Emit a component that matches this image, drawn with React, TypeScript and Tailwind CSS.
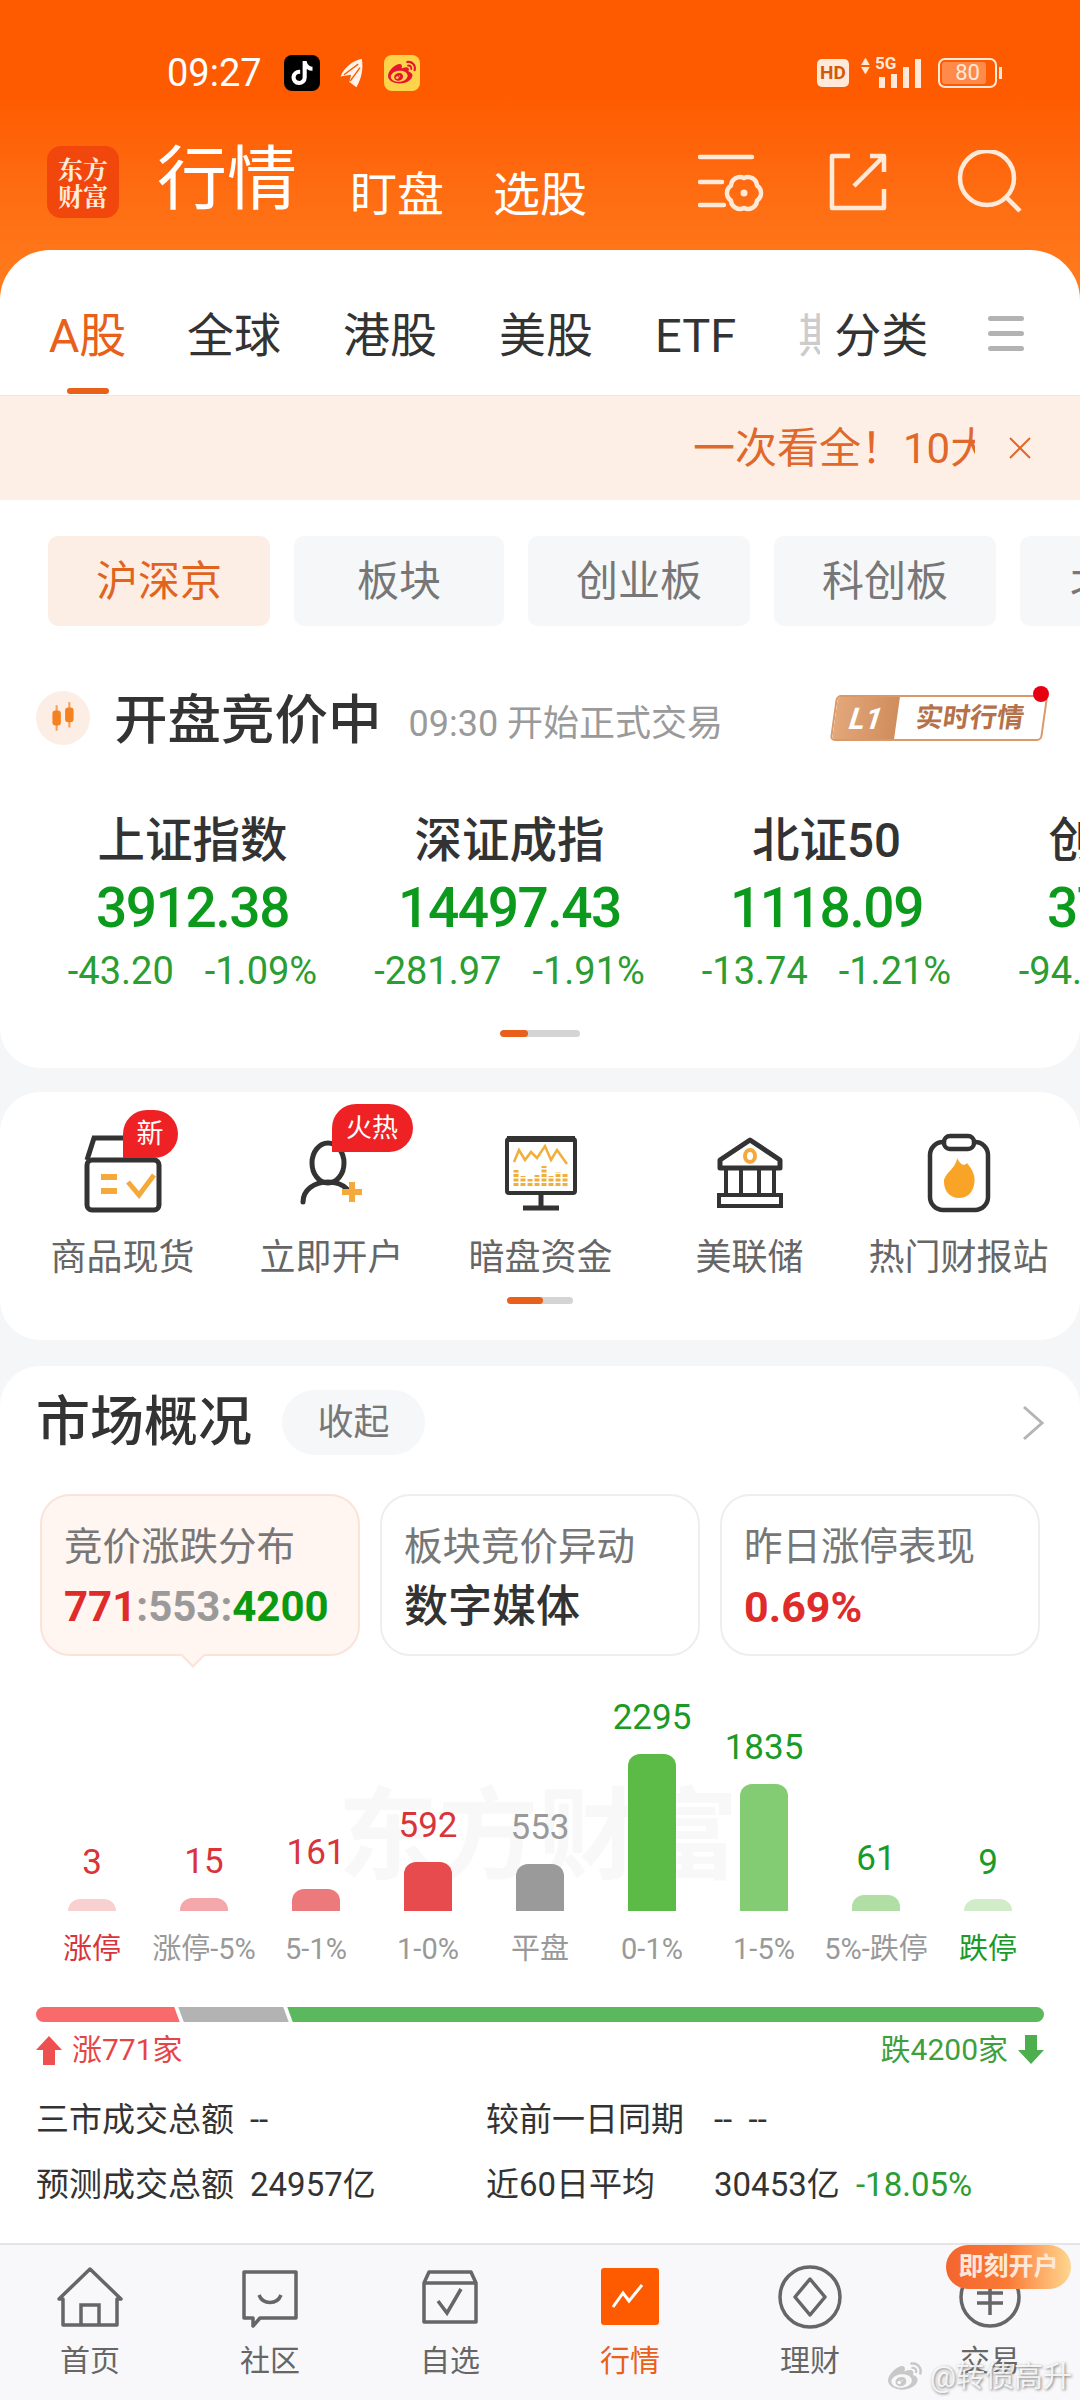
import { FaTiktok, FaWeibo } from "react-icons/fa";

const tabs = ["全球", "港股", "美股"];
const chips = ["板块", "创业板", "科创板"];

const indices = [
  { name: "上证指数", value: "3912.38", diff: "-43.20", pct: "-1.09%" },
  { name: "深证成指", value: "14497.43", diff: "-281.97", pct: "-1.91%" },
  { name: "北证50", value: "1118.09", diff: "-13.74", pct: "-1.21%" },
  { name: "创业板指", value: "3712.36", diff: "-94.52", pct: "-2.48%" },
];

const bars = [
  { n: "3", label: "涨停", h: "h-[12px]", bar: "bg-[#f8d0d0]", num: "text-[#d8343a]", text: "text-[#d8343a]" },
  { n: "15", label: "涨停-5%", h: "h-[13px]", bar: "bg-[#f5a8ab]", num: "text-[#d8343a]", text: "text-[#999999]" },
  { n: "161", label: "5-1%", h: "h-[22px]", bar: "bg-[#ec7a7c]", num: "text-[#d8343a]", text: "text-[#999999]" },
  { n: "592", label: "1-0%", h: "h-[49px]", bar: "bg-[#e84b4e]", num: "text-[#d8343a]", text: "text-[#999999]" },
  { n: "553", label: "平盘", h: "h-[47px]", bar: "bg-[#9a9a9a]", num: "text-[#999999]", text: "text-[#999999]" },
  { n: "2295", label: "0-1%", h: "h-[157px]", bar: "bg-[#5cbb46]", num: "text-[#1a9a26]", text: "text-[#999999]" },
  { n: "1835", label: "1-5%", h: "h-[127px]", bar: "bg-[#84cc74]", num: "text-[#1a9a26]", text: "text-[#999999]" },
  { n: "61", label: "5%-跌停", h: "h-[16px]", bar: "bg-[#b0dea5]", num: "text-[#1a9a26]", text: "text-[#999999]" },
  { n: "9", label: "跌停", h: "h-[12px]", bar: "bg-[#d0ecc8]", num: "text-[#1a9a26]", text: "text-[#1a9a26]" },
];

const BoxIcon = () => (
  <svg viewBox="0 0 84 84" className="w-[84px] h-[84px]" fill="none">
    <path d="M6 30 L13 8 H60 V30" stroke="#333" strokeWidth="5" />
    <rect x="6" y="30" width="72" height="50" rx="5" stroke="#333" strokeWidth="5" />
    <path d="M20 47 H36 M20 61 H36" stroke="#f5a93a" strokeWidth="6" />
    <path d="M47 52 L58 65 L73 45" stroke="#f5a93a" strokeWidth="5" />
  </svg>
);

const PersonIcon = () => (
  <svg viewBox="0 0 84 84" className="w-[84px] h-[84px]" fill="none">
    <ellipse cx="38" cy="33" rx="16" ry="20" stroke="#333" strokeWidth="5" />
    <path d="M13 72 C13 60 24 52 38 52 C46 52 52 54 57 59" stroke="#333" strokeWidth="5" strokeLinecap="round" />
    <path d="M62 52 V72 M52 62 H72" stroke="#f5a93a" strokeWidth="6" />
  </svg>
);

const MonitorIcon = () => (
  <svg viewBox="0 0 84 84" className="w-[84px] h-[84px]" fill="none">
    <rect x="8" y="9" width="68" height="54" rx="2" stroke="#333" strokeWidth="4" />
    <path d="M8 9 H76" stroke="#333" strokeWidth="6" />
    <path d="M42 63 V76 M24 78 H60" stroke="#333" strokeWidth="5" />
    <path d="M15 32 L20 20 L26 30 L32 22 L38 28 L46 16 L52 30 L58 20 L68 34" stroke="#f0ae3c" strokeWidth="2.5" />
    <path d="M17 56 V40 M24 56 V46 M31 56 V49 M38 56 V45 M45 56 V36 M52 56 V46 M59 56 V42 M66 56 V43" stroke="#f0ae3c" strokeWidth="5" strokeDasharray="3 1.5" />
  </svg>
);

const BankIcon = () => (
  <svg viewBox="0 0 84 84" className="w-[84px] h-[84px]" fill="none">
    <path d="M42 10 L12 30 V38 H72 V30 Z" stroke="#333" strokeWidth="5" strokeLinejoin="round" />
    <ellipse cx="42" cy="26" rx="5" ry="6" stroke="#f5a93a" strokeWidth="4" />
    <path d="M18 38 V65 M33 38 V65 M51 38 V65 M66 38 V65" stroke="#333" strokeWidth="4" />
    <rect x="11" y="65" width="62" height="11" stroke="#333" strokeWidth="4" />
  </svg>
);

const ClipIcon = () => (
  <svg viewBox="0 0 84 84" className="w-[84px] h-[84px]" fill="none">
    <rect x="13" y="12" width="58" height="68" rx="13" stroke="#333" strokeWidth="4.5" />
    <rect x="27" y="6" width="30" height="13" rx="6" fill="#fff" stroke="#333" strokeWidth="4.5" />
    <path d="M40 28 C44 36 48 36 50 33 C56 40 59 47 57 55 C55 65 48 68 42 68 C33 68 27 61 27 52 C27 43 39 39 40 28 Z" fill="#f9a426" />
  </svg>
);

const quick = [
  { label: "商品现货", icon: <BoxIcon /> },
  { label: "立即开户", icon: <PersonIcon /> },
  { label: "暗盘资金", icon: <MonitorIcon /> },
  { label: "美联储", icon: <BankIcon /> },
  { label: "热门财报站", icon: <ClipIcon /> },
];

const NavHome = () => (
  <svg viewBox="0 0 70 70" className="w-[70px] h-[70px]" fill="none" stroke="#666" strokeWidth="3.5">
    <path d="M8 34 L4 34 L35 4 L66 34 L62 34 V60 H8 Z" strokeLinejoin="round" />
    <path d="M26 60 V40 H44 V60" />
  </svg>
);
const NavChat = () => (
  <svg viewBox="0 0 70 70" className="w-[70px] h-[70px]" fill="none" stroke="#666" strokeWidth="3.5">
    <path d="M9 7 H61 V53 H25 L18 61 V53 H9 Z" strokeLinejoin="round" />
    <path d="M24 30 C28 40 42 40 46 30" />
  </svg>
);
const NavWatch = () => (
  <svg viewBox="0 0 70 70" className="w-[70px] h-[70px]" fill="none" stroke="#666" strokeWidth="3.5">
    <path d="M9 18 L14 7 H56 L61 18 V57 H9 Z" strokeLinejoin="round" />
    <path d="M9 18 H61" />
    <path d="M23 36 L32 48 L46 24" />
  </svg>
);
const NavMarket = () => (
  <svg viewBox="0 0 70 70" className="w-[70px] h-[70px]" fill="none">
    <rect x="6" y="3" width="58" height="57" rx="3" fill="#fe5a00" />
    <path d="M18 42 L28 28 L34 36 L47 20" stroke="#ffffff" strokeWidth="3" />
  </svg>
);
const NavFinance = () => (
  <svg viewBox="0 0 70 70" className="w-[70px] h-[70px]" fill="none" stroke="#666" strokeWidth="3.5">
    <circle cx="35" cy="32" r="30" />
    <path d="M35 14 L50 32 L35 50 L20 32 Z" strokeLinejoin="round" />
  </svg>
);
const NavTrade = () => (
  <svg viewBox="0 0 70 70" className="w-[70px] h-[70px]" fill="none" stroke="#666" strokeWidth="3.5">
    <circle cx="35" cy="32" r="29" />
    <path d="M24 12 L35 24 L46 12 M22 28 H48 M22 38 H48 M35 24 V50" />
  </svg>
);

const nav = [
  { label: "首页", icon: <NavHome /> },
  { label: "社区", icon: <NavChat /> },
  { label: "自选", icon: <NavWatch /> },
  { label: "行情", icon: <NavMarket />, active: true },
  { label: "理财", icon: <NavFinance /> },
  { label: "交易", icon: <NavTrade /> },
];

const Pager = () => (
  <div className="flex w-[66px] h-[7px] rounded-full bg-[#d4d4d4] overflow-hidden">
    <div className="w-[36px] rounded-full bg-[#e8601a]" />
  </div>
);

export default function App() {
  return (
    <div className="w-[1080px] h-[2400px] overflow-hidden bg-[#f5f6f8] font-['Roboto','Noto_Sans_CJK_SC',sans-serif] text-[#333333]">
      {/* Header */}
      <div className="h-[300px] bg-gradient-to-b from-[#fe5a00] from-[30%] to-[#ff7d1e] text-white">
        <div className="h-[146px] flex items-center pl-[167px] pr-[78px]">
          <span className="text-[38px] leading-none">09:27</span>
          <div className="ml-[22px] w-[36px] h-[36px] rounded-[8px] bg-black flex items-center justify-center">
            <FaTiktok className="w-[24px] h-[24px] text-white" />
          </div>
          <svg viewBox="0 0 30 36" className="ml-[18px] w-[28px] h-[32px]">
            <path d="M26 2 C16 4 6 12 2 22 L14 20 L12 28 L20 34 C26 24 28 12 26 2 Z" fill="#fff3ea" />
            <path d="M6 20 L22 8 M13 27 L24 12" stroke="#fe5a00" strokeWidth="1.5" />
          </svg>
          <div className="ml-[18px] w-[36px] h-[36px] rounded-[8px] bg-[#fcd34a] flex items-center justify-center">
            <FaWeibo className="w-[28px] h-[28px] text-[#e6162d]" />
          </div>
          <div className="ml-auto flex items-center text-[#ffe9d8]">
            <div className="w-[32px] h-[28px] rounded-[5px] bg-[#ffe9d8] text-[#d4570e] text-[19px] font-bold leading-[28px] text-center">HD</div>
            <div className="ml-[10px] relative w-[62px] h-[30px]">
              <span className="absolute left-[16px] -top-[3px] text-[17px] font-bold leading-none">5G</span>
              <span className="absolute left-[2px] top-0 text-[9px] leading-[9px]">▲<br />▼</span>
              <div className="absolute inset-0 flex items-end justify-end gap-[6px]">
                <div className="w-[6px] h-[11px] bg-[#ffe9d8]" />
                <div className="w-[6px] h-[14px] bg-[#ffe9d8]" />
                <div className="w-[6px] h-[21px] bg-[#ffe9d8]" />
                <div className="w-[6px] h-[29px] bg-[#ffe9d8]" />
              </div>
            </div>
            <div className="ml-[17px] flex items-center">
              <div className="relative w-[59px] h-[30px] rounded-[7px] border-2 border-[#ffe9d8] overflow-hidden text-[22px] leading-[26px] text-center">
                <div className="absolute left-[2px] top-[2px] bottom-[2px] w-[44px] bg-[#ff8a4a] rounded-[3px]" />
                <span className="relative">80</span>
              </div>
              <div className="ml-[2px] w-[3px] h-[12px] bg-[#ffe9d8]" />
            </div>
          </div>
        </div>
        <div className="flex h-[104px] pl-[47px]">
          <div className="w-[72px] h-[72px] rounded-[14px] bg-[#f2470c] flex flex-col items-center justify-center font-['Noto_Serif_CJK_SC','Noto_Sans_CJK_SC',serif] font-bold text-[#ffeadb] text-[25px] leading-[27px]">
            <span>东方</span>
            <span>财富</span>
          </div>
          <span className="ml-[38px] -mt-[6px] h-[80px] text-[70px] leading-[80px]">行情</span>
          <span className="ml-[53px] mt-[19px] text-[47px] leading-[60px]">盯盘</span>
          <span className="ml-[49px] mt-[19px] text-[47px] leading-[60px]">选股</span>
          <div className="ml-auto mr-[56px] mt-[4px] flex items-start text-[#ffe9d8]">
            <svg viewBox="698 150 66 62" className="w-[66px] h-[62px]" fill="none" stroke="currentColor" strokeWidth="4.5" strokeLinecap="round">
              <path d="M700 157 H752 M700 182 H722 M700 205 H724" />
              <path d="M744 178 A9 9 0 0 1 757 185.5 A9 9 0 0 1 757 200.5 A9 9 0 0 1 744 208 A9 9 0 0 1 731 200.5 A9 9 0 0 1 731 185.5 A9 9 0 0 1 744 178 Z" strokeLinejoin="round" />
              <circle cx="744" cy="193" r="3.5" fill="currentColor" stroke="none" />
            </svg>
            <svg viewBox="828 150 60 62" className="ml-[64px] w-[60px] h-[62px]" fill="none" stroke="currentColor" strokeWidth="4.5" strokeLinejoin="round">
              <path d="M850 156 H832 V208 H884 V189 M870 156 H884 V172 M884 156 L854 186" />
            </svg>
            <svg viewBox="956 150 68 64" className="ml-[68px] w-[68px] h-[64px]" fill="none" stroke="currentColor" strokeWidth="4.5">
              <circle cx="987" cy="178" r="27" />
              <path d="M1007 198 L1020 211" />
            </svg>
          </div>
        </div>
      </div>

      {/* Market tabs card */}
      <div className="-mt-[50px] relative bg-white rounded-t-[50px] rounded-b-[40px] h-[818px] overflow-hidden">
        <div className="h-[145px] pt-[59px] pl-[48px] flex text-[47px] leading-[54px]">
          <div className="w-[79px] flex flex-col items-center text-[#e8601a]">
            <span>A股</span>
            <div className="mt-[25px] w-[42px] h-[6px] rounded-full bg-[#e8601a]" />
          </div>
          <div className="ml-[60px] flex gap-[62px]">
            {tabs.map((t) => (
              <span key={t}>{t}</span>
            ))}
          </div>
          <span className="ml-[62px] text-[47px]">ETF</span>
          <span className="ml-[62px] w-[22px] overflow-hidden text-[#cccccc] whitespace-nowrap">期货</span>
          <span className="ml-[14px]">分类</span>
          <div className="ml-[60px] mt-[7px] flex flex-col gap-[10px]">
            <div className="w-[36px] h-[5px] rounded-full bg-[#b3b3b3]" />
            <div className="w-[36px] h-[5px] rounded-full bg-[#b3b3b3]" />
            <div className="w-[36px] h-[5px] rounded-full bg-[#b3b3b3]" />
          </div>
        </div>

        {/* Notice banner */}
        <div className="h-[105px] border-t border-[#ece8e4] bg-[#fdefe6] flex items-center pl-[693px] text-[42px] text-[#e0682a]">
          <div className="w-[282px] overflow-hidden whitespace-nowrap">一次看全！10大热门</div>
          <svg viewBox="0 0 24 24" className="ml-[33px] w-[24px] h-[24px]" fill="none" stroke="#e0682a" strokeWidth="2">
            <path d="M2 2 L22 22 M22 2 L2 22" />
          </svg>
        </div>

        {/* Chips */}
        <div className="mt-[36px] pl-[48px] flex gap-[24px] h-[90px] text-[42px] leading-[92px] text-[#777777] overflow-hidden">
          <div className="w-[222px] shrink-0 rounded-[10px] bg-[#fdeee5] text-[#e0641e] text-center">沪深京</div>
          {chips.map((c, i) => (
            <div key={c} className={`${i === 0 ? "w-[210px]" : "w-[222px]"} shrink-0 rounded-[10px] bg-[#f6f7f9] text-center`}>
              {c}
            </div>
          ))}
          <div className="w-[222px] shrink-0 rounded-[10px] bg-[#f6f7f9] pl-[50px]">北证</div>
        </div>

        {/* Auction status */}
        <div className="mt-[64px] pl-[36px] h-[56px] flex items-center">
          <div className="w-[54px] h-[54px] rounded-full bg-[#fdeee5] flex items-center justify-center">
            <svg viewBox="0 0 30 34" className="w-[32px] h-[36px]" fill="none">
              <path d="M9 5 V29" stroke="#f5a15a" strokeWidth="2" />
              <rect x="5" y="10" width="8" height="14" rx="3" fill="#f58220" />
              <path d="M21 2 V26" stroke="#f5a15a" strokeWidth="2" />
              <rect x="17" y="7" width="8" height="14" rx="3" fill="#f58220" />
            </svg>
          </div>
          <span className="ml-[24px] mt-[5px] text-[53.5px] leading-[60px] font-medium">开盘竞价中</span>
          <span className="ml-[27px] mt-[12px] text-[36px] text-[#9a9a9a]">09:30 开始正式交易</span>
          <div className="ml-auto mr-[35px] relative">
            <div className="flex w-[212px] h-[46px] -skew-x-[8deg] rounded-[5px] border-2 border-[#d9996a] overflow-hidden bg-white">
              <div className="w-[62px] bg-gradient-to-r from-[#e3a77a] to-[#d08d5c] flex items-center justify-center text-white text-[30px] font-bold italic">L1</div>
              <div className="flex-1 flex items-center justify-center text-[#b5724a] text-[27px] font-bold">实时行情</div>
            </div>
            <div className="absolute -top-[9px] -right-[4px] w-[16px] h-[16px] rounded-full bg-[#e60012]" />
          </div>
        </div>

        {/* Indices */}
        <div className="mt-[67px] pl-[34px] flex overflow-hidden">
          {indices.map((x) => (
            <div key={x.name} className="w-[317px] shrink-0 flex flex-col items-center">
              <span className="text-[47.5px] leading-[56px] font-medium">{x.name}</span>
              <span className="mt-[9px] text-[55px] leading-[60px] font-medium tracking-[-1.4px] text-[#0b9a1b]">{x.value}</span>
              <div className="mt-[13px] flex gap-[31px] text-[38px] leading-[40px] text-[#2a9d33] whitespace-nowrap">
                <span>{x.diff}</span>
                <span>{x.pct}</span>
              </div>
            </div>
          ))}
        </div>
        <div className="mt-[39px] flex justify-center">
          <div className="flex w-[80px] h-[7px] rounded-full bg-[#d4d4d4] overflow-hidden">
            <div className="w-[28px] rounded-full bg-[#e8601a]" />
          </div>
        </div>
      </div>

      {/* Quick entries */}
      <div className="mt-[24px] h-[248px] bg-white rounded-[40px] pt-[38px] pl-[18px]">
        <div className="flex">
          {quick.map((q, i) => (
            <div key={q.label} className="w-[209px] flex flex-col items-center">
              <div className="relative w-[84px] h-[84px]">
                {q.icon}
                {i === 0 && (
                  <div className="absolute left-[42px] -top-[20px] w-[55px] h-[48px] rounded-t-[24px] rounded-br-[24px] bg-[#ee2224] text-white text-[27px] leading-[48px] text-center">新</div>
                )}
                {i === 1 && (
                  <div className="absolute left-[42px] -top-[26px] w-[81px] h-[48px] rounded-t-[24px] rounded-br-[24px] bg-[#ee2224] text-white text-[26px] leading-[48px] text-center">火热</div>
                )}
              </div>
              <span className="mt-[22px] text-[36px] leading-[44px] text-[#666666] whitespace-nowrap">{q.label}</span>
            </div>
          ))}
        </div>
        <div className="mt-[17px] pr-[18px] flex justify-center">
          <Pager />
        </div>
      </div>

      {/* Market overview */}
      <div className="mt-[26px] h-[877px] bg-white rounded-t-[40px] pt-[24px] relative">
        <div className="flex items-center h-[65px] pl-[36px] pr-[35px]">
          <span className="text-[54px] leading-[60px] font-medium">市场概况</span>
          <div className="ml-[30px] w-[143px] h-[65px] rounded-full bg-[#f6f7f9] text-[#777777] text-[36px] flex items-center justify-center">收起</div>
          <svg viewBox="0 0 24 36" className="ml-auto w-[24px] h-[36px]" fill="none" stroke="#b5b5b5" strokeWidth="3">
            <path d="M3 2 L21 18 L3 34" />
          </svg>
        </div>

        <div className="mt-[39px] px-[40px] flex gap-[20px]">
          <div className="relative w-[320px] h-[162px] rounded-[30px] border-2 border-[#fbe3da] bg-[#fff5f1] pl-[22px]">
            <div className="mt-[28px] text-[38.5px] leading-[46px] text-[#777777]">竞价涨跌分布</div>
            <div className="mt-[14px] text-[42px] leading-[46px] font-bold whitespace-nowrap">
              <span className="text-[#e02b2b]">771</span>
              <span className="text-[#9a9a9a]">:553:</span>
              <span className="text-[#0a9a10]">4200</span>
            </div>
            <div className="absolute left-[142px] -bottom-[10px] w-[18px] h-[18px] rotate-45 bg-[#fff5f1] border-r-2 border-b-2 border-[#fbe3da]" />
          </div>
          <div className="w-[320px] h-[162px] rounded-[30px] border-2 border-[#eeeeee] pl-[22px]">
            <div className="mt-[28px] text-[38.5px] leading-[46px] text-[#777777]">板块竞价异动</div>
            <div className="mt-[14px] text-[44px] leading-[46px] font-medium">数字媒体</div>
          </div>
          <div className="w-[320px] h-[162px] rounded-[30px] border-2 border-[#eeeeee] pl-[22px]">
            <div className="mt-[28px] text-[38.5px] leading-[46px] text-[#777777]">昨日涨停表现</div>
            <div className="mt-[14px] text-[43px] leading-[46px] font-bold text-[#e02b2b]">0.69%</div>
          </div>
        </div>

        {/* Distribution chart */}
        <div className="relative mt-[42px] pl-[36px]">
          <div className="absolute left-[338px] top-[84px] text-[100px] leading-[110px] text-[#f8f8f8] font-bold whitespace-nowrap">东方财富</div>
          <div className="relative flex items-end">
            {bars.map((b) => (
              <div key={b.label} className="w-[112px] flex flex-col items-center">
                <span className={`text-[35px] leading-[40px] mb-[16px] ${b.num}`}>{b.n}</span>
                <div className={`w-[48px] rounded-t-[12px] ${b.h} ${b.bar}`} />
              </div>
            ))}
          </div>
          <div className="relative flex mt-[18px]">
            {bars.map((b) => (
              <span key={b.label} className={`w-[112px] text-center text-[29px] leading-[40px] whitespace-nowrap ${b.text}`}>
                {b.label}
              </span>
            ))}
          </div>
        </div>

        {/* Advance / decline bar */}
        <div className="mt-[38px] mx-[36px] h-[15px] rounded-full overflow-hidden flex">
          <div className="w-[145px] -ml-[4px] pl-[4px] bg-[#f96a6a] skew-x-[20deg]" />
          <div className="ml-[4px] w-[105px] bg-[#b3b3b3] skew-x-[20deg]" />
          <div className="ml-[4px] flex-1 -mr-[8px] bg-[#5cb85c] skew-x-[20deg]" />
        </div>
        <div className="mt-[8px] mx-[36px] flex justify-between text-[30px] leading-[40px]">
          <div className="flex items-center text-[#e64545]">
            <svg viewBox="0 0 26 30" className="w-[26px] h-[30px]">
              <path d="M13 1 L26 15 H19 V30 H7 V15 H0 Z" fill="#ee5050" />
            </svg>
            <span className="ml-[10px]">涨771家</span>
          </div>
          <div className="flex items-center text-[#3f9f3f]">
            <span className="mr-[10px]">跌4200家</span>
            <svg viewBox="0 0 26 30" className="w-[26px] h-[30px]">
              <path d="M13 29 L26 15 H19 V0 H7 V15 H0 Z" fill="#4cae4c" />
            </svg>
          </div>
        </div>

        {/* Turnover stats */}
        <div className="mt-[28px] pl-[36px] text-[33px] leading-[44px] flex flex-col gap-[21px]">
          <div className="flex">
            <span className="w-[214px]">三市成交总额</span>
            <span className="w-[236px]">--</span>
            <span className="w-[228px]">较前一日同期</span>
            <span>-- &nbsp;--</span>
          </div>
          <div className="flex">
            <span className="w-[214px]">预测成交总额</span>
            <span className="w-[236px]">24957亿</span>
            <span className="w-[228px]">近60日平均</span>
            <span className="w-[142px]">30453亿</span>
            <span className="text-[#2a9d33]">-18.05%</span>
          </div>
        </div>
      </div>

      {/* Bottom navigation */}
      <div className="relative h-[157px] border-t-2 border-[#e5e5e7] bg-[#f8f8fa] grid grid-cols-6 pt-[20px]">
        {nav.map((n) => (
          <div key={n.label} className="flex flex-col items-center">
            {n.icon}
            <span className={`mt-[6px] text-[30px] leading-[40px] ${n.active ? "text-[#e8601a]" : "text-[#666666]"}`}>{n.label}</span>
          </div>
        ))}
        <div className="absolute left-[946px] top-0 w-[125px] h-[44px] rounded-[22px] bg-gradient-to-r from-[#f4652e] via-[#f97a35] to-[#fdd68e] text-[#ffe8d8] text-[25px] font-bold leading-[44px] text-center">即刻开户</div>
        <div className="absolute left-[885px] top-[112px] flex items-center text-[#ffffffd9] text-[29px] leading-[40px] [text-shadow:1px_1px_3px_#777]">
          <FaWeibo className="w-[40px] h-[34px] text-[#c8c8c8]" />
          <span className="ml-[5px] whitespace-nowrap">@转债高升</span>
        </div>
      </div>
    </div>
  );
}
